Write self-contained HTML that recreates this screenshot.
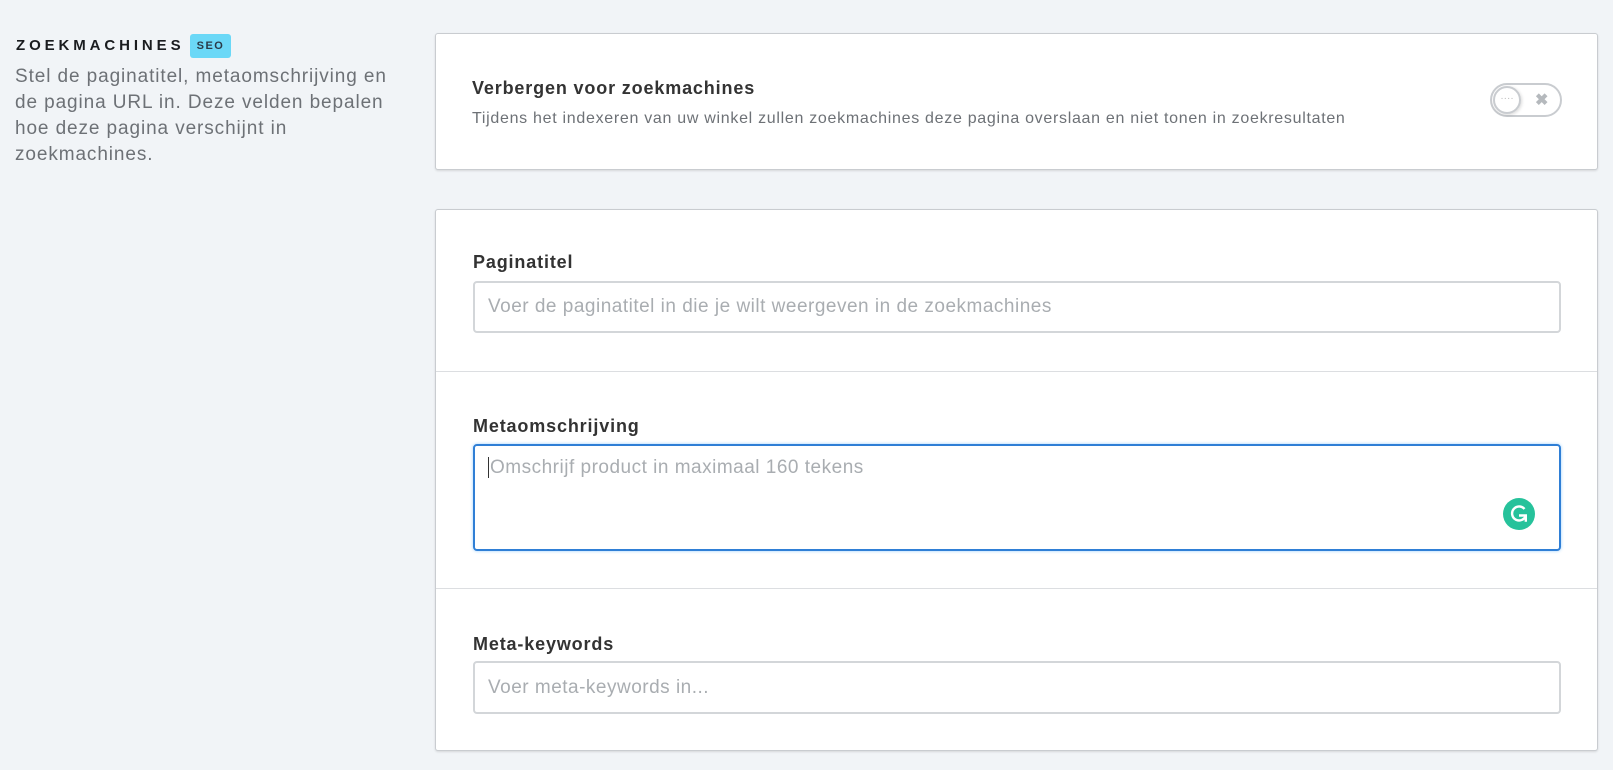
<!DOCTYPE html>
<html><head><meta charset="utf-8"><style>
*{box-sizing:border-box;margin:0;padding:0}
body{width:1613px;height:770px;background:#f1f4f7;font-family:"Liberation Sans",sans-serif;position:relative;overflow:hidden;color:#3d3f42}
.abs{position:absolute}
.h{left:16px;top:37px;font-size:15px;font-weight:bold;letter-spacing:3.9px;color:#1a1c1f}
.badge{left:190px;top:34px;width:41px;height:24px;background:#6bd8f7;border-radius:3px;font-size:11px;font-weight:bold;letter-spacing:1.5px;color:#2a3a48;text-align:center;line-height:24px}
.p{left:15px;top:64px;width:400px;font-size:19px;letter-spacing:0.9px;line-height:26px;color:#6d7176;white-space:nowrap}
.card{background:#fff;border:1px solid #c9ccd0;border-radius:3px;box-shadow:0 1px 2px rgba(0,0,0,.12);left:435px;width:1163px}
.t{font-size:18px;font-weight:bold;color:#333;letter-spacing:0.85px}
.s{font-size:16px;color:#6d7176;letter-spacing:0.7px}
.inp{left:473px;width:1088px;border:2px solid #d3d6d9;border-radius:4px;font-size:19px;letter-spacing:0.5px;color:#a9adb1;padding-left:13px;white-space:nowrap}
.div{left:436px;width:1161px;height:1px;background:#dcdee1}
</style></head><body>
<div class="abs h">ZOEKMACHINES</div>
<div class="abs badge">SEO</div>
<div class="abs p">Stel de paginatitel, metaomschrijving en<br>de pagina URL in. Deze velden bepalen<br>hoe deze pagina verschijnt in<br>zoekmachines.</div>

<div class="abs card" style="top:33px;height:137px"></div>
<div class="abs t" style="left:472px;top:78px">Verbergen voor zoekmachines</div>
<div class="abs s" style="left:472px;top:110px">Tijdens het indexeren van uw winkel zullen zoekmachines deze pagina overslaan en niet tonen in zoekresultaten</div>
<div class="abs" style="left:1490px;top:83px;width:72px;height:34px;border:2px solid #c9ccd0;border-radius:17px;background:#fff">
 <div class="abs" style="left:1px;top:1px;width:28px;height:28px;border-radius:50%;border:2px solid #c9ccd0;box-shadow:1px 1px 3px rgba(0,0,0,.15);text-align:center;font-size:10px;line-height:22px;color:#bbb;letter-spacing:0px">····</div>
 <div class="abs" style="left:43px;top:5px;font-size:16px;font-weight:bold;color:#b5b9bd">✖</div>
</div>

<div class="abs card" style="top:209px;height:542px"></div>
<div class="abs t" style="left:473px;top:252px">Paginatitel</div>
<div class="abs inp" style="top:281px;height:52px;line-height:48px">Voer de paginatitel in die je wilt weergeven in de zoekmachines</div>
<div class="abs div" style="top:371px"></div>
<div class="abs t" style="left:473px;top:416px">Metaomschrijving</div>
<div class="abs inp" style="top:444px;height:107px;border-color:#2f7fd6;box-shadow:0 0 3px #9cd0ff;padding-top:11px;line-height:22px"><span style="border-left:1px solid #333;padding-left:1px">Omschrijf product in maximaal 160 tekens</span></div>
<div class="abs" style="left:1503px;top:498px;width:32px;height:32px;border-radius:50%;background:#26c29b">
<svg width="32" height="32" viewBox="0 0 32 32"><path d="M21.5 11A7 7 0 1 0 22.8 17.5" fill="none" stroke="#fff" stroke-width="2.4"/><path d="M16 17.5h6.8v6.3" fill="none" stroke="#fff" stroke-width="2.4"/></svg></div>
<div class="abs div" style="top:588px"></div>
<div class="abs t" style="left:473px;top:634px">Meta-keywords</div>
<div class="abs inp" style="top:661px;height:53px;line-height:49px">Voer meta-keywords in...</div>
</body></html>
